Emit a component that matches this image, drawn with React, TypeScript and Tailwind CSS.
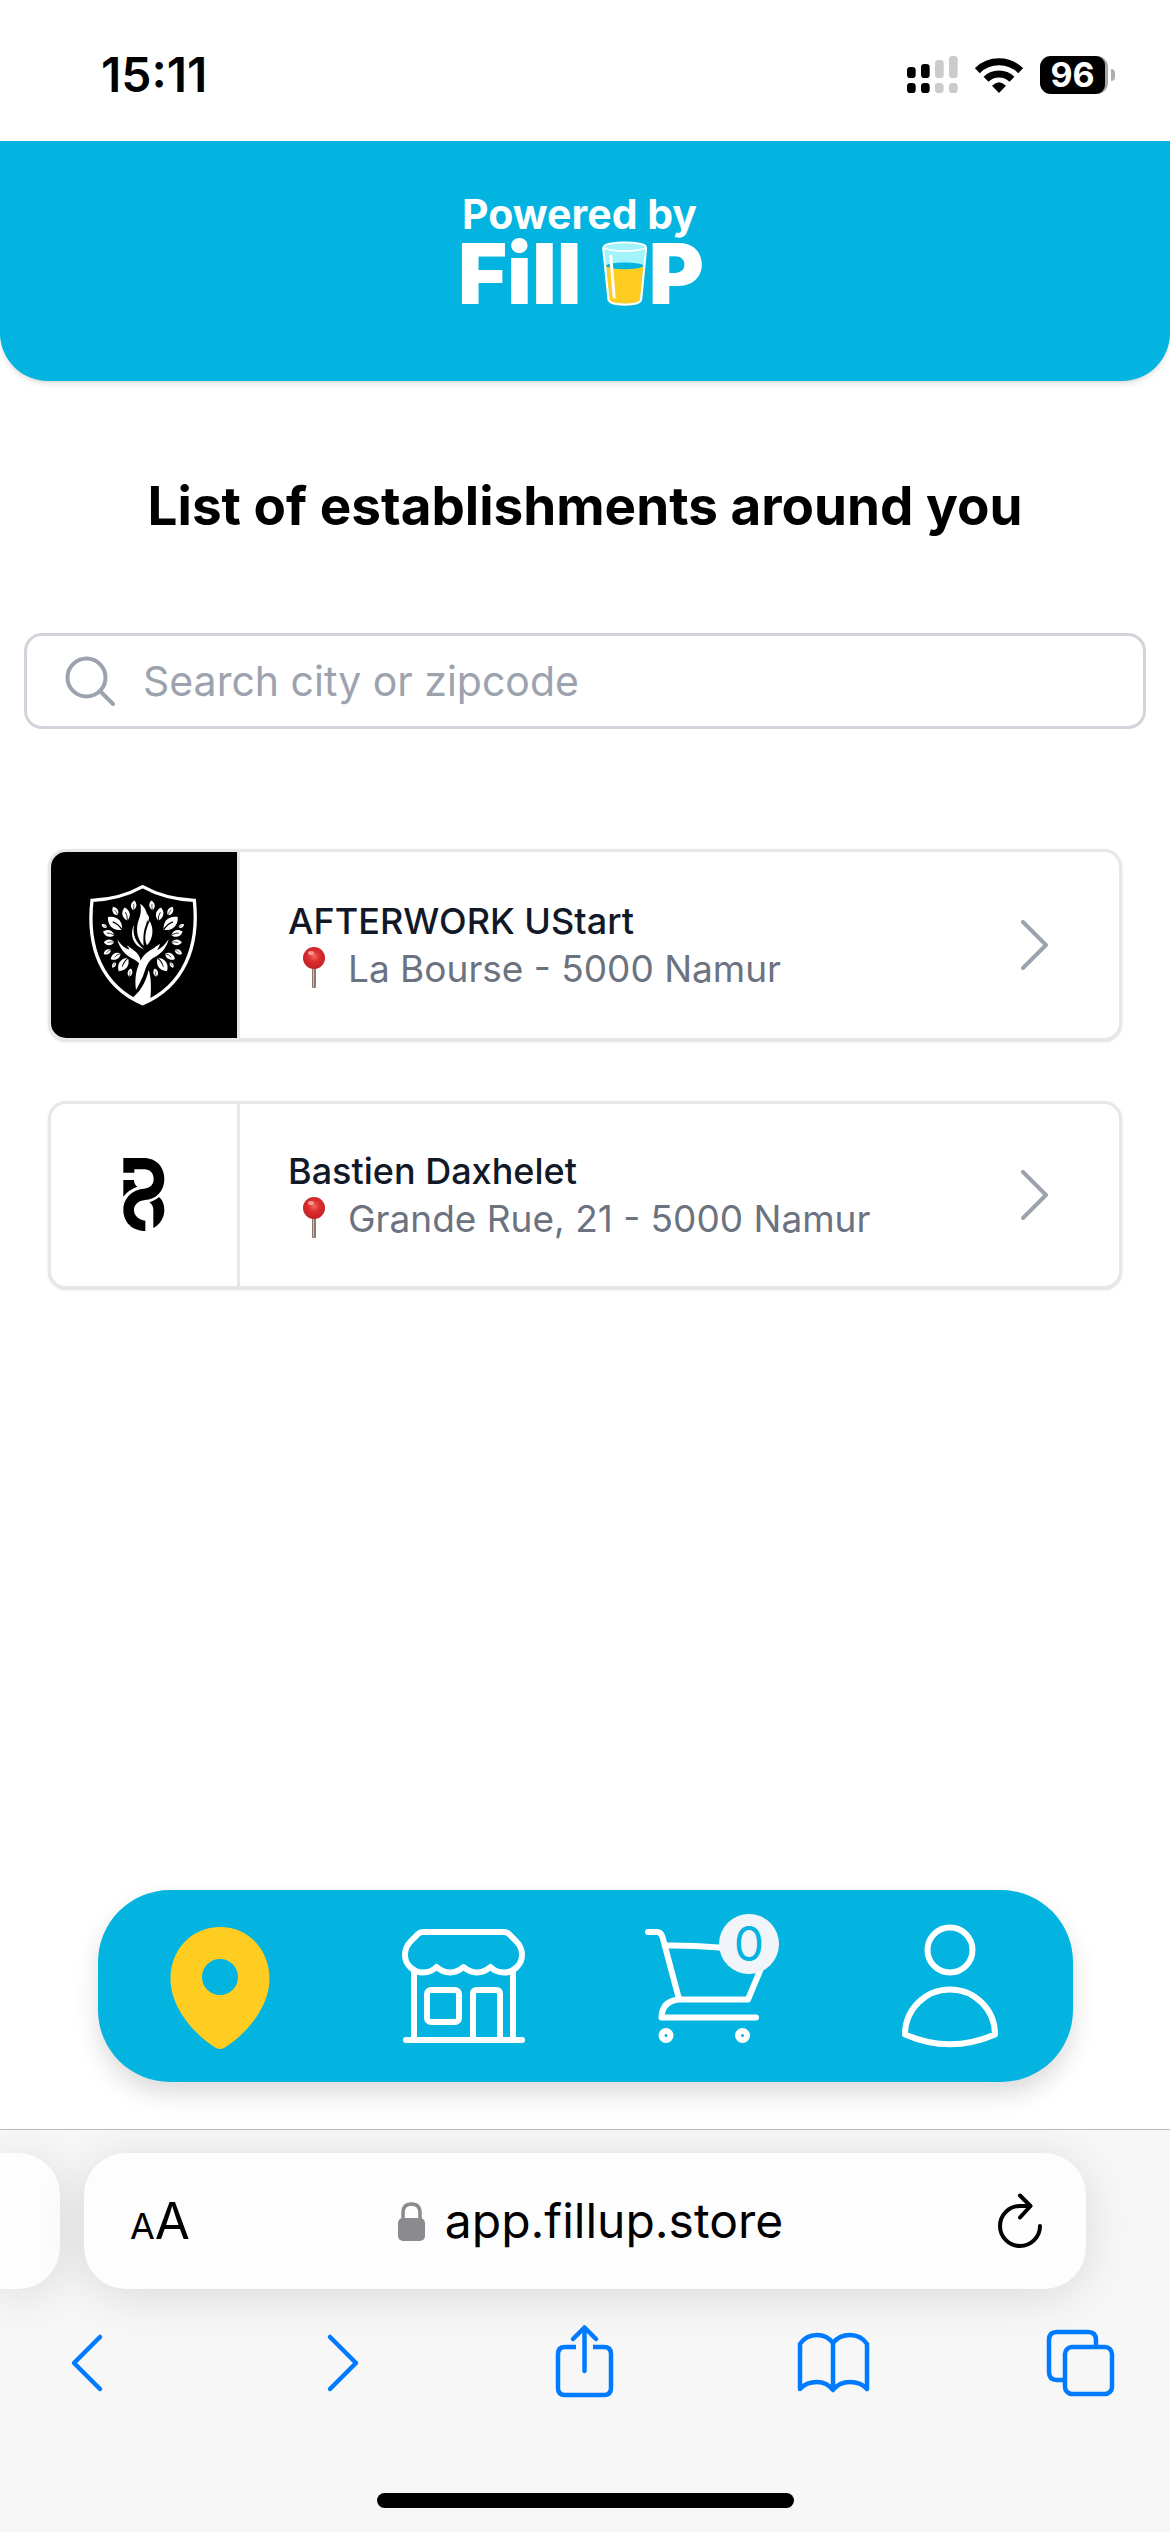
import React from "react";

type IconProps = { className?: string };

/* ---------- status bar ---------- */

function SignalIcon() {
  return (
    <svg viewBox="81 48 153 111" className="h-[37px] w-[51px]" aria-label="Signal">
      <g fill="#000">
        <rect x="81" y="81" width="26" height="33" rx="10" />
        <rect x="123" y="72" width="26" height="42" rx="10" />
        <rect x="81" y="129" width="26" height="30" rx="10" />
        <rect x="123" y="129" width="26" height="30" rx="10" />
      </g>
      <g fill="#cbcbcb">
        <rect x="165" y="60" width="26" height="54" rx="10" />
        <rect x="207" y="48" width="26" height="66" rx="10" />
        <rect x="165" y="129" width="26" height="30" rx="10" />
        <rect x="207" y="129" width="26" height="30" rx="10" />
      </g>
    </svg>
  );
}

function WifiIcon() {
  return (
    <svg viewBox="285 45 144 108" className="h-9 w-12" aria-label="Wi-Fi">
      <g fill="none" stroke="#000" strokeWidth="21">
        <path d="M292 86 A93 93 0 0 1 422 86" />
        <path d="M318 112 A56 56 0 0 1 396 112" />
      </g>
      <path d="M357 153 L336 131 Q357 110 378 131 Z" />
    </svg>
  );
}

function StatusBar() {
  return (
    <div className="flex h-[141px] items-center justify-between pt-2 pr-[55px] pl-[101px]">
      <time className="text-[48px] leading-[54px] font-semibold text-black">15:11</time>
      <div className="flex items-center">
        <SignalIcon />
        <div className="w-[17px]" />
        <WifiIcon />
        <div className="ml-[17px] flex h-[38px] w-[68px] rounded-[11px] bg-[#a6a6a6]">
          <div className="flex w-[65px] items-center justify-center rounded-l-[11px] rounded-r-[9px] bg-black text-[34px] leading-[38px] font-bold text-white">
            96
          </div>
        </div>
        <div className="ml-[3px] h-3 w-1 rounded-r-full bg-[#b0b0b0]" />
      </div>
    </div>
  );
}

/* ---------- brand header ---------- */

function GlassIcon({ className }: IconProps) {
  return (
    <svg viewBox="497 184 134 194" className={className} aria-hidden="true">
      <path
        d="M500 202 L517 360 Q520 374 565 375 Q610 374 613 360 L629 202 Z"
        fill="#a3f4fa"
      />
      <path d="M509 258 L520 360 Q524 370 565 371 Q606 370 610 360 L621 258 Z" fill="#ffcc22" />
      <ellipse cx="565" cy="258" rx="56" ry="10" fill="#02b4df" />
      <path
        d="M500 202 L516 358 Q519 374 565 374 Q611 374 614 358 L629 202"
        fill="none"
        stroke="#fff"
        strokeWidth="6"
      />
      <ellipse cx="565" cy="201" rx="63" ry="13" fill="#a3f4fa" stroke="#fff" strokeWidth="5" />
      <path d="M523 229 L533 351" stroke="#fff" strokeWidth="9" strokeLinecap="round" />
    </svg>
  );
}

function BrandHeader() {
  return (
    <header className="h-60 rounded-b-[48px] bg-[#02b4df] pt-[53px] text-white shadow-md">
      <div className="mx-auto w-[246px]">
        <p className="text-[41px] leading-10 font-bold whitespace-nowrap">Powered by</p>
        <p className="mt-[7px] flex items-center text-[84px] leading-[64px] font-black">
          <span className="-ml-1">Fill</span>
          <GlassIcon className="ml-5 h-[65px] w-[45px]" />
          <span className="ml-0.5">P</span>
        </p>
      </div>
    </header>
  );
}

/* ---------- search ---------- */

function SearchField() {
  return (
    <div className="mx-6 mt-[91px] flex h-24 items-center rounded-[18px] border-[3px] border-[#d1d5db] pr-9 pl-[38px]">
      <label htmlFor="place-search">
        <svg
          viewBox="0 0 50 50"
          className="h-[50px] w-[50px]"
          fill="none"
          stroke="#9ca3af"
          strokeWidth="4"
          strokeLinecap="round"
          aria-hidden="true"
        >
          <circle cx="21.500" cy="21.500" r="19" />
          <path d="M35 35 L48 48" />
        </svg>
      </label>
      <input
        id="place-search"
        type="text"
        aria-label="Search city or zipcode"
        placeholder="Search city or zipcode"
        className="ml-7 min-w-0 flex-1 bg-transparent text-[41px] leading-[60px] outline-none placeholder:text-[#9ca3af]"
      />
    </div>
  );
}

/* ---------- establishment logos ---------- */

const leaves = [
  { x: 136, y: 153, length: 28, angle: -28 },
  { x: 168, y: 162, length: 38, angle: -12 },
  { x: 191, y: 136, length: 28, angle: 8 },
  { x: 135, y: 190, length: 54, angle: -48 },
  { x: 103, y: 198, length: 18, angle: -60 },
  { x: 116, y: 220, length: 34, angle: -72 },
  { x: 117, y: 247, length: 30, angle: -90 },
  { x: 112, y: 276, length: 24, angle: -118 },
  { x: 137, y: 289, length: 32, angle: -120 },
  { x: 132, y: 315, length: 18, angle: -150 },
  { x: 160, y: 314, length: 46, angle: -145 },
  { x: 180, y: 338, length: 24, angle: 12 },
];

function Foliage() {
  return (
    <g>
      {leaves.map((leaf) => (
        <g
          key={`${leaf.x}-${leaf.y}`}
          transform={`translate(${leaf.x} ${leaf.y}) rotate(${leaf.angle}) scale(${leaf.length / 40})`}
        >
          <path d="M0 -21 C15 -10 16 10 0 21 C-16 10 -15 -10 0 -21 Z" fill="#fff" />
          <path d="M0 21 Q4 6 -1 -6" fill="none" stroke="#000" strokeWidth="2.500" />
        </g>
      ))}
    </g>
  );
}

function ShieldTreeLogo() {
  return (
    <svg viewBox="-57 -24 558 558" className="h-[186px] w-[186px] bg-black" aria-hidden="true">
      <path
        d="M218 80 Q150 118 66 121 C50 260 94 378 218 431 C342 378 388 260 373 121 Q286 118 218 80 Z"
        fill="none"
        stroke="#fff"
        strokeWidth="10"
      />
      <Foliage />
      <g transform="translate(437 0) scale(-1 1)">
        <Foliage />
      </g>
      <g fill="#fff">
        <path d="M211 131 C229 144 236 166 229 192 C220 212 219 234 221 258 C198 234 198 202 206 180 C213 163 214 148 211 131 Z" />
        <path d="M239 183 C252 205 250 236 231 256 C222 240 225 214 239 183 Z" />
        <path d="M229 160 C238 168 239 176 234 186 C230 180 230 170 229 160 Z" />
        <path d="M192 195 C186 222 198 250 222 267 C203 262 187 246 186 222 C186 210 188 202 192 195 Z" />
        <path d="M142 238 C150 252 162 264 176 268 C180 268 174 262 171 256 C182 264 190 270 198 276 C209 286 214 300 213 318 C204 304 196 300 184 294 C164 284 148 264 142 238 Z" />
        <path d="M296 238 C290 262 276 280 256 290 C236 300 230 316 224 334 C218 354 208 372 198 390 C192 350 202 318 214 298 C224 280 236 274 252 264 C260 258 266 254 270 252 C268 260 262 268 262 271 C276 264 288 250 296 238 Z" />
        <path d="M184 416 C208 398 226 372 236 330 C244 352 244 388 241 420 L218 434 Z" />
      </g>
    </svg>
  );
}

function MonogramLogo() {
  return (
    <svg viewBox="-117 -18 558 546" className="h-[182px] w-[186px]" aria-hidden="true">
      <path d="M100 144 H162 C198 144 223 170 223 207 C223 245 197 268 165 270 C145 272 132 284 132 300 C132 318 147 330 166 332 V363 C125 363 100 335 100 300 C100 262 130 238 162 236 C180 234 191 224 191 207 C191 190 180 178 163 178 H133 V188 H100 Z" />
      <path d="M100 210 H132 C132 220 136 226 142 230 C125 236 110 246 100 260 Z" />
      <path d="M207 261 C218 270 223 285 223 300 C223 325 208 345 190 354 V300 C190 290 186 282 178 277 C190 273 199 268 207 261 Z" />
    </svg>
  );
}

function PushpinIcon() {
  return (
    <svg viewBox="0 0 48 48" className="h-12 w-12 shrink-0" aria-hidden="true">
      <defs>
        <radialGradient id="pin-head" cx="50%" cy="42%" r="55%">
          <stop offset="0" stopColor="#f4685f" />
          <stop offset="0.450" stopColor="#dd2f30" />
          <stop offset="1" stopColor="#c32026" />
        </radialGradient>
      </defs>
      <rect x="24" y="22" width="4" height="21" rx="1" fill="#8c7a70" />
      <rect x="25" y="22" width="1" height="20" fill="#c9bdb6" />
      <circle cx="26" cy="13" r="11" fill="url(#pin-head)" />
      <ellipse cx="23" cy="8" rx="3" ry="2" fill="#f99a90" />
    </svg>
  );
}

/* ---------- establishments ---------- */

const establishments = [
  { name: "AFTERWORK UStart", address: "La Bourse - 5000 Namur", Logo: ShieldTreeLogo },
  { name: "Bastien Daxhelet", address: "Grande Rue, 21 - 5000 Namur", Logo: MonogramLogo },
];

function EstablishmentList() {
  return (
    <ul className="mx-12 mt-[120px] flex flex-col gap-[60px]">
      {establishments.map(({ name, address, Logo }) => (
        <li key={name}>
          <a
            href="#"
            className="flex items-center overflow-hidden rounded-[18px] border-[3px] border-[#e5e7eb] bg-white shadow-sm"
          >
            <span className="border-r-[3px] border-[#e5e7eb]">
              <Logo />
            </span>
            <span className="min-w-0 flex-1 pl-12">
              <span className="block text-[36px] leading-[48px] font-medium text-[#111827]">{name}</span>
              <span className="flex items-center gap-3 text-[37px] leading-[48px] text-[#6b7280]">
                <PushpinIcon />
                {address}
              </span>
            </span>
            <svg
              viewBox="0 0 28 50"
              className="mr-[70px] h-[50px] w-7"
              fill="none"
              stroke="#9ca3af"
              strokeWidth="4"
              strokeLinecap="round"
              strokeLinejoin="round"
              aria-hidden="true"
            >
              <path d="M2 2 L25 25 L2 48" />
            </svg>
          </a>
        </li>
      ))}
    </ul>
  );
}

/* ---------- app navigation ---------- */

function NavSvg({ children }: { children: React.ReactNode }) {
  return (
    <svg
      viewBox="0 0 144 144"
      className="h-36 w-36"
      fill="none"
      stroke="#fff"
      strokeWidth="6"
      strokeLinecap="round"
      strokeLinejoin="round"
      aria-hidden="true"
    >
      {children}
    </svg>
  );
}

function AppNav() {
  return (
    <nav className="mx-auto mb-[47px] grid h-48 w-10/12 grid-cols-4 place-items-center rounded-[72px] bg-[#02b4df] shadow-[0_12px_24px_rgba(0,0,0,0.14)]">
      <a href="#" aria-label="Nearby">
        <NavSvg>
          <path
            fillRule="evenodd"
            stroke="none"
            fill="#ffcc22"
            d="M73 13 C45 13 23.500 35 23.500 65 C23.500 94 48 121 69 134 Q73 136 77 134 C98 121 122.500 94 122.500 65 C122.500 35 101 13 73 13 Z M73 45 A18 18 0 1 1 73 81 A18 18 0 1 1 73 45 Z"
          />
        </NavSvg>
      </a>
      <a href="#" aria-label="Shop">
        <NavSvg>
          <path d="M32 18 H113 Q116 18 118 20 L125 27 Q131 33 131 41 C131 51 122 58.500 113 58.500 Q105 58.500 99.500 53 Q93 58.500 86 58.500 Q79 58.500 72.500 53 Q66 58.500 59 58.500 Q52 58.500 45.500 53 Q40 58.500 32 58.500 C23 58.500 14 51 14 41 Q14 33 20 27 L27 20 Q29 18 32 18 Z" />
          <path d="M23 57 V126 M122 57 V126 M15 126 H131" />
          <rect x="36" y="76" width="32" height="32" rx="4" />
          <path d="M82 126 V80 Q82 76 86 76 H105 Q109 76 109 80 V126" />
        </NavSvg>
      </a>
      <a href="#" className="relative" aria-label="Cart, 0 items">
        <NavSvg>
          <path d="M13 18 H22 Q26 18 27.500 23 L44 85" />
          <path d="M31 31.500 Q84 31 132 40 L113 85.500 H44 Q27 87 26.500 103.500 H121" />
          <circle cx="31" cy="121.500" r="4.500" />
          <circle cx="107.500" cy="121.500" r="4.500" />
        </NavSvg>
        <span className="absolute top-0 right-0 flex h-[60px] w-[60px] items-center justify-center rounded-full bg-[#f1f5f9] text-[48px] leading-none text-[#02b4df]">
          0
        </span>
      </a>
      <a href="#" aria-label="Account">
        <NavSvg>
          <circle cx="71" cy="36" r="22.500" />
          <path d="M26 120.500 A44.700 44.700 0 0 1 116 120.500 Q71 140 26 120.500 Z" />
        </NavSvg>
      </a>
    </nav>
  );
}

/* ---------- browser chrome ---------- */

function LockIcon() {
  return (
    <svg viewBox="0 0 27 39" className="h-[39px] w-[27px]" aria-hidden="true">
      <rect x="0" y="16" width="27" height="23" rx="5" fill="#8a8a8f" />
      <path d="M5 18 V11 Q5 2 13.500 2 Q22 2 22 11 V18" fill="none" stroke="#8a8a8f" strokeWidth="3.500" />
    </svg>
  );
}

function ToolbarButton({ label, children }: { label: string; children: React.ReactNode }) {
  return (
    <button type="button" aria-label={label}>
      <svg
        viewBox="0 0 80 80"
        className="h-20 w-20"
        fill="none"
        stroke="#007aff"
        strokeWidth="4.500"
        strokeLinecap="round"
        strokeLinejoin="round"
        aria-hidden="true"
      >
        {children}
      </svg>
    </button>
  );
}

function BrowserBar() {
  return (
    <footer className="overflow-hidden border-t border-[#b9b9bb] bg-[#f7f7f7] pb-6">
      <div className="mt-[23px] flex gap-6">
        <div className="h-[136px] w-[60px] rounded-r-[42px] bg-[#fdfdfd] shadow-[0_6px_48px_rgba(0,0,0,0.12)]" />
        <div className="mr-[84px] flex h-[136px] flex-1 items-center justify-between rounded-[42px] bg-[#fdfdfd] pr-[43px] pl-[46px] text-black shadow-[0_6px_48px_rgba(0,0,0,0.12)]">
          <button type="button" aria-label="Page settings" className="flex items-baseline pt-1">
            <span className="text-[36px] leading-[60px]">A</span>
            <span className="text-[51px] leading-[60px]">A</span>
          </button>
          <a href="#" className="flex items-center gap-5 pr-1.5 text-[48px] leading-[60px]">
            <LockIcon />
            app.fillup.store
          </a>
          <button type="button" aria-label="Reload">
            <svg
              viewBox="0 0 46 56"
              className="h-14 w-[46px]"
              fill="none"
              stroke="#000"
              strokeWidth="4"
              strokeLinecap="round"
              strokeLinejoin="round"
              aria-hidden="true"
            >
              <path d="M43 33 A20 20 0 1 1 23 13 H33" />
              <path d="M23 2.500 L33.500 13 L23 24.500" />
            </svg>
          </button>
        </div>
      </div>
      <div className="mt-[33px] flex justify-between pr-[50px] pl-[46px]">
        <ToolbarButton label="Back">
          <path d="M54 15 L28 41 L54 67" />
        </ToolbarButton>
        <ToolbarButton label="Forward">
          <path d="M35 15 L61 41 L35 67" />
        </ToolbarButton>
        <ToolbarButton label="Share">
          <path d="M33 25 H22 Q15 25 15 32 V66 Q15 73 22 73 H61 Q68 73 68 66 V32 Q68 25 61 25 H50" strokeLinecap="butt" />
          <path d="M41.500 49 V6 M30 17 L41.500 5.500 L53 17" />
        </ToolbarButton>
        <ToolbarButton label="Bookmarks">
          <path d="M41 21 Q35 13 25 13 Q14 13 8 22 V67 Q14 60 25 60 Q35 60 41 68 Q47 60 58 60 Q69 60 75 67 V22 Q69 13 58 13 Q47 13 41 21 V67" />
        </ToolbarButton>
        <ToolbarButton label="Tabs">
          <rect x="25" y="25" width="47" height="47" rx="7" />
          <path d="M24 58 H17 Q9 58 9 50 V18 Q9 10 17 10 H48 Q56 10 56 18 V24" strokeLinecap="butt" />
        </ToolbarButton>
      </div>
      <div className="mx-auto mt-[91px] h-[15px] w-[417px] rounded-full bg-black" />
    </footer>
  );
}

export default function App() {
  return (
    <div className="flex min-h-screen flex-col bg-white font-['Inter','Liberation_Sans',sans-serif]">
      <StatusBar />
      <BrandHeader />
      <main className="flex-1">
        <h1 className="mt-[89px] text-center text-[53px] leading-[72px] font-bold text-black">
          List of establishments around you
        </h1>
        <SearchField />
        <EstablishmentList />
      </main>
      <AppNav />
      <BrowserBar />
    </div>
  );
}
